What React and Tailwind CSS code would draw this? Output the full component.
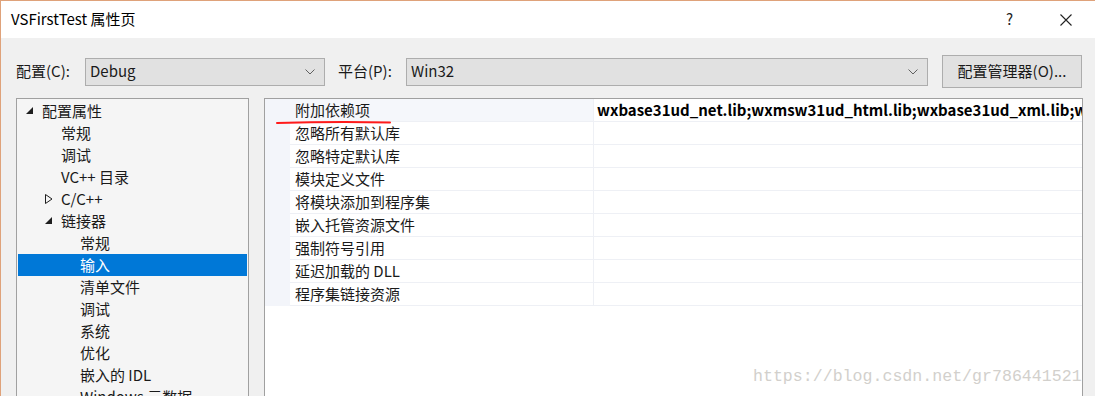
import React from 'react';

const FONT = { fontFamily: '"Noto Sans CJK SC", "Noto Sans", sans-serif' };

const treeItems = [
  { label: '配置属性', level: 0, toggle: 'open' },
  { label: '常规', level: 1 },
  { label: '调试', level: 1 },
  { label: 'VC++ 目录', level: 1 },
  { label: 'C/C++', level: 1, toggle: 'closed' },
  { label: '链接器', level: 1, toggle: 'open' },
  { label: '常规', level: 2 },
  { label: '输入', level: 2, selected: true },
  { label: '清单文件', level: 2 },
  { label: '调试', level: 2 },
  { label: '系统', level: 2 },
  { label: '优化', level: 2 },
  { label: '嵌入的 IDL', level: 2 },
  { label: 'Windows 元数据', level: 2 },
];

const props = [
  '附加依赖项',
  '忽略所有默认库',
  '忽略特定默认库',
  '模块定义文件',
  '将模块添加到程序集',
  '嵌入托管资源文件',
  '强制符号引用',
  '延迟加载的 DLL',
  '程序集链接资源',
];

function Chevron() {
  return (
    <svg width="10" height="6" viewBox="0 0 10 6" className="shrink-0">
      <path d="M0.5 0.5 L5 5 L9.5 0.5" fill="none" stroke="#606060" strokeWidth="1" />
    </svg>
  );
}

function Combo({ value, className }) {
  return (
    <div className={`h-[28px] bg-[#e1e1e1] border border-[#adadad] flex items-center pl-[4px] pr-[9px] ${className}`}>
      <span className="flex-1 text-[15px] text-[#1a1a1a]">{value}</span>
      <Chevron />
    </div>
  );
}

function Toggle({ kind }) {
  if (kind === 'open') {
    return (
      <svg width="8" height="8" viewBox="0 0 8 8">
        <polygon points="7,0 7,7 0,7" fill="#1e1e1e" />
      </svg>
    );
  }
  return (
    <svg width="8" height="10" viewBox="0 0 8 10">
      <polygon points="0.5,0.5 7,5 0.5,9.5" fill="none" stroke="#1e1e1e" strokeWidth="1" />
    </svg>
  );
}

function TreeRow({ item }) {
  const indent = ['pl-[8px]', 'pl-[27px]', 'pl-[46px]'][item.level];
  return (
    <div
      className={`h-[22px] flex items-center ${indent} ${
        item.selected ? 'bg-[#0078d7] text-white' : 'text-[#1a1a1a]'
      }`}
    >
      <span className="w-[16px] flex items-center">{item.toggle && <Toggle kind={item.toggle} />}</span>
      <span className="text-[15px] whitespace-nowrap">{item.label}</span>
    </div>
  );
}

export default function App() {
  return (
    <div
      className="w-[1095px] h-[396px] overflow-hidden bg-[#f0f0f0] border-l border-t border-[#dfa27a] flex flex-col"
      style={FONT}
    >
      {/* Title bar */}
      <div className="h-[37px] shrink-0 bg-white flex items-center pl-[10px] pr-[23px]">
        <span className="flex-1 text-[15px] text-black">VSFirstTest 属性页</span>
        <span className="text-[15px] text-[#222] mr-[47px]">?</span>
        <svg width="12" height="12" viewBox="0 0 12 12">
          <path d="M0.5 0.5 L11.5 11.5 M11.5 0.5 L0.5 11.5" stroke="#222" strokeWidth="1.1" />
        </svg>
      </div>

      {/* Config row */}
      <div className="flex items-center h-[33px] mt-[17px] pl-[15px] shrink-0">
        <span className="text-[15px] text-[#1a1a1a] w-[69px]">配置(C):</span>
        <Combo value="Debug" className="w-[240px]" />
        <span className="text-[15px] text-[#1a1a1a] ml-[13px] w-[68px]">平台(P):</span>
        <Combo value="Win32" className="w-[522px]" />
        <button className="ml-[14px] w-[140px] h-[33px] bg-[#e1e1e1] border border-[#adadad] text-[15px] text-[#1a1a1a]">
          配置管理器(O)...
        </button>
      </div>

      {/* Panels */}
      <div className="flex mt-[10px] pl-[15px] gap-[15px] flex-1 min-h-0">
        <div className="w-[233px] border border-[#a0a0a0] border-b-0 bg-[#f5f5f5] p-[1px] overflow-hidden">
          {treeItems.map((it, i) => (
            <TreeRow key={i} item={it} />
          ))}
        </div>

        <div className="relative w-[819px] border border-[#a0a0a0] border-b-0 bg-white overflow-hidden">
          <div className="flex">
            <div className="w-[25px] bg-[#f3f5fa] shrink-0" />
            <div className="flex-1 min-w-0">
              {props.map((p, i) => (
                <div key={i} className="h-[23px] flex border-b border-[#eef0f5]">
                  <div
                    className={`w-[304px] shrink-0 flex items-center pl-[5px] text-[15px] text-[#1a1a1a] border-r border-[#eef0f5] ${
                      i === 0 ? 'bg-[#f5f7fb]' : ''
                    }`}
                  >
                    {p}
                  </div>
                  <div className="flex-1 min-w-0 flex items-center pl-[3px] overflow-hidden">
                    {i === 0 && (
                      <span className="text-[15px] font-bold text-black whitespace-nowrap">
                        wxbase31ud_net.lib;wxmsw31ud_html.lib;wxbase31ud_xml.lib;wxmsw31ud_core.lib
                      </span>
                    )}
                  </div>
                </div>
              ))}
            </div>
          </div>

          {/* red annotation underline */}
          <svg className="absolute left-[11px] top-[21px]" width="115" height="5" viewBox="0 0 115 5">
            <path d="M1 3 Q57 1.5 114 2.5" fill="none" stroke="#ff1a1a" strokeWidth="2" strokeLinecap="round" />
          </svg>

          {/* watermark */}
          <span
            className="absolute left-[488px] top-[266px] text-[16.6px] text-[#d2d0cc] whitespace-nowrap"
            style={{ fontFamily: '"Liberation Mono", monospace' }}
          >
            https://blog.csdn.net/gr786441521
          </span>
        </div>
      </div>
    </div>
  );
}
